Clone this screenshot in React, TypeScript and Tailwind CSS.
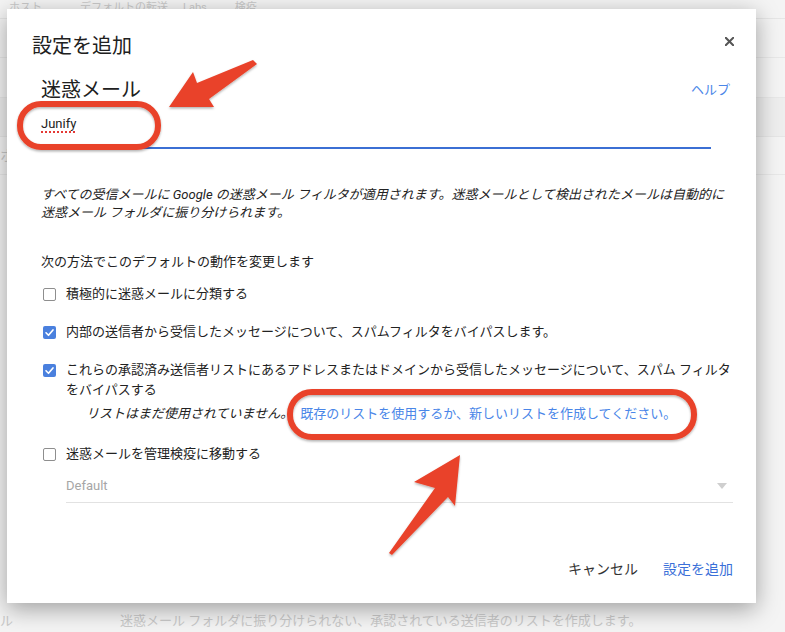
import React from 'react';

const Checkbox: React.FC<{ checked?: boolean }> = ({ checked }) => (
  <div className="ml-[2px] mr-[10px] mt-[3.5px] shrink-0">
    {checked ? (
      <div className="w-[13px] h-[13px] rounded-[2px] bg-[#4a80de] flex items-center justify-center">
        <svg width="11" height="11" viewBox="0 0 12 12">
          <path d="M2.2 6.3 L4.9 9 L9.8 3.2" fill="none" stroke="white" strokeWidth="1.8" strokeLinecap="round" strokeLinejoin="round" />
        </svg>
      </div>
    ) : (
      <div className="w-[13px] h-[13px] rounded-[2px] border-[1.5px] border-[#8e8e8e] bg-white" />
    )}
  </div>
);

const App: React.FC = () => {
  return (
    <div className="relative w-[785px] h-[632px] overflow-hidden bg-[#f4f4f4] font-['Roboto','Noto_Sans_CJK_JP',sans-serif] text-[#222]">
      {/* Background page (behind the modal) */}
      <div className="flex flex-col h-full text-[#c9c9c9]">
        <div className="flex h-[19px] items-start text-[11px] leading-[14px] pt-[1px] border-b border-[#e6e6e6]">
          <span className="ml-[9px]">ホスト</span>
          <span className="ml-[38px]">デフォルトの転送</span>
          <span className="ml-[15px]">Labs</span>
          <span className="ml-[28px]">検疫</span>
        </div>
        <div className="h-[39px] border-b border-[#e8e8e8]" />
        <div className="h-[40px] border-b border-[#e8e8e8]" />
        <div className="h-[39px] bg-[#eeeeee] border-b border-[#e6e6e6]" />
        <div className="h-[38px] border-b border-[#e8e8e8] text-[15px] leading-[38px]">ホ</div>
        <div className="mt-auto flex items-end text-[13px] leading-[20px] pb-[1px]">
          <span className="w-[120px]">ル</span>
          <span>迷惑メール フォルダに振り分けられない、承認されている送信者のリストを作成します。</span>
        </div>
      </div>

      {/* Modal dialog */}
      <div className="absolute left-[7px] top-[9px] w-[749px] h-[594px] bg-white shadow-[0_6px_22px_rgba(0,0,0,0.35)] flex flex-col">
        <div className="flex justify-between pt-[23px] pl-[25px] pr-[22px]">
          <h2 className="text-[20px] leading-[28px] text-[#202020]">設定を追加</h2>
          <button className="mt-[5px] w-[9px] h-[9px]">
            <svg width="9" height="9" viewBox="0 0 9 9" className="block">
              <path d="M0.8 0.8 L8.2 8.2 M8.2 0.8 L0.8 8.2" stroke="#555" strokeWidth="2" strokeLinecap="square" />
            </svg>
          </button>
        </div>

        <div className="flex flex-col flex-1 pl-[34px] pr-[23px]">
          <div className="flex items-center justify-between mt-[16px]">
            <h3 className="text-[20px] leading-[28px] text-[#202020]">迷惑メール</h3>
            <a className="text-[13px] leading-[20px] text-[#4a86e8] mr-[3px]">ヘルプ</a>
          </div>

          <div className="mt-[10px] w-[670px] pb-[13px] border-b-2 border-[#3b6fd4] text-[13px] leading-[20px]">
            <span className="underline decoration-dotted decoration-[#e53935] decoration-2 underline-offset-[3px]">Junify</span>
          </div>

          <p className="mt-[37px] text-[13px] leading-[18px] italic text-[#222]">
            すべての受信メールに Google の迷惑メール フィルタが適用されます。迷惑メールとして検出されたメールは自動的に
            <br />
            迷惑メール フォルダに振り分けられます。
          </p>

          <p className="mt-[30px] text-[13px] leading-[20px]">次の方法でこのデフォルトの動作を変更します</p>

          <div className="mt-[12px] flex items-start text-[13px] leading-[20px]">
            <Checkbox />
            <span>積極的に迷惑メールに分類する</span>
          </div>

          <div className="mt-[18px] flex items-start text-[13px] leading-[20px]">
            <Checkbox checked />
            <span>内部の送信者から受信したメッセージについて、スパムフィルタをバイパスします。</span>
          </div>

          <div className="mt-[18px] flex items-start text-[13px] leading-[20px]">
            <Checkbox checked />
            <span>
              これらの承認済み送信者リストにあるアドレスまたはドメインから受信したメッセージについて、スパム フィルタ
              <br />
              をバイパスする
            </span>
          </div>

          <div className="mt-[4px] pl-[45px] flex text-[13px] leading-[20px]">
            <span className="italic">リストはまだ使用されていません。</span>
            <a className="ml-[7px] text-[#4a86e8]">既存のリストを使用するか、新しいリストを作成してください。</a>
          </div>

          <div className="mt-[20px] flex items-start text-[13px] leading-[20px]">
            <Checkbox />
            <span>迷惑メールを管理検疫に移動する</span>
          </div>

          <div className="mt-[12px] ml-[25px] flex items-center justify-between pb-[6px] border-b border-[#e2e2e2] text-[13px] leading-[20px] text-[#a6a6a6]">
            <span>Default</span>
            <svg width="10" height="6" viewBox="0 0 10 6" className="mr-[6px]">
              <path d="M0 0 L10 0 L5 6 Z" fill="#cfcfcf" />
            </svg>
          </div>

          <div className="mt-auto pb-[24px] flex justify-end gap-[25px] text-[14px] leading-[20px]">
            <button className="text-[#333]">キャンセル</button>
            <button className="text-[#3a6fd8]">設定を追加</button>
          </div>
        </div>
      </div>

      {/* Red annotations drawn on top of the screenshot */}
      <svg className="absolute inset-0 pointer-events-none" width="785" height="632" viewBox="0 0 785 632">
        <defs>
          <filter id="sh" x="-10%" y="-10%" width="120%" height="130%">
            <feDropShadow dx="0" dy="1.5" stdDeviation="1.2" floodColor="#000" floodOpacity="0.3" />
          </filter>
        </defs>
        <g filter="url(#sh)" fill="none" stroke="#e9432a" strokeWidth="6">
          <rect x="20" y="104" width="138" height="43" rx="21" />
          <rect x="290" y="392" width="404" height="45" rx="22" />
        </g>
        <g filter="url(#sh)" fill="#e9432a">
          <polygon points="169,107 193,72 197,83 253,60 257,64 209,99 214,107" />
          <polygon points="460,455 414,482 435,488 389,553 392,555 448,497 455,506" />
        </g>
      </svg>
    </div>
  );
};

export default App;
